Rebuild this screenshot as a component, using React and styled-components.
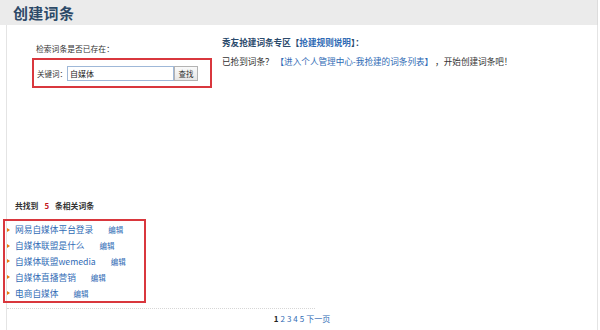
import React from "react";
import styled, { createGlobalStyle } from "styled-components";

const GlobalStyle = createGlobalStyle`
  html, body {
    margin: 0;
    padding: 0;
    background: #fff;
  }
  body {
    font-family: "Noto Sans CJK SC", "Noto Sans", sans-serif;
    color: #333;
  }
`;

const Page = styled.div`
  width: 598px;
  height: 330px;
  overflow: hidden;
`;

const Header = styled.div`
  height: 25px;
  background: #ebebeb;
  border-right: 1px solid #dcdcdc;
  padding-left: 13px;
  display: flex;
  align-items: center;
`;

const Title = styled.h1`
  margin: 0;
  font-size: 15px;
  font-weight: bold;
  color: #2d4a68;
  letter-spacing: 0.3px;
`;

const Panel = styled.div`
  margin-left: 6px;
  height: 305px;
  border-left: 1px solid #e4e4e4;
  border-right: 1px solid #e4e4e4;
`;

const TopRow = styled.div`
  display: flex;
`;

const SearchColumn = styled.div`
  margin-left: 25px;
  width: 180px;
`;

const Hint = styled.div`
  margin-top: 18px;
  margin-bottom: 3px;
  padding-left: 4px;
  font-size: 7.8px;
  line-height: 12px;
  color: #333;
`;

const SearchBox = styled.div`
  box-sizing: border-box;
  height: 30px;
  border: 2px solid #d9373d;
  display: flex;
  align-items: center;
  padding-left: 3px;
`;

const Label = styled.label`
  width: 30px;
  font-size: 7.5px;
  color: #333;
  white-space: nowrap;
`;

const Input = styled.input`
  box-sizing: border-box;
  width: 107px;
  height: 15px;
  margin: 0;
  padding: 0 2px;
  border: 1px solid #9fb8d8;
  font-family: inherit;
  font-size: 8px;
  color: #222;
  outline: none;
`;

const Button = styled.button`
  box-sizing: border-box;
  width: 24px;
  height: 15px;
  margin: 0;
  padding: 0;
  border: 1px solid #b3b3b3;
  background: linear-gradient(#fafafa, #e6e6e6);
  font-family: inherit;
  font-size: 7.5px;
  color: #333;
`;

const NoticeColumn = styled.div`
  margin-left: 10px;
  padding-top: 11px;
`;

const NoticeTitle = styled.div`
  font-size: 8.6px;
  line-height: 12px;
  font-weight: bold;
  color: #2b4a6c;
  white-space: nowrap;
`;

const NoticeText = styled.div`
  margin-top: 7px;
  font-size: 8.6px;
  line-height: 12px;
  color: #333;
  white-space: pre;
`;

const Link = styled.a`
  color: #2f6bb5;
  text-decoration: none;
`;

const Results = styled.div`
  margin-top: 112px;
`;

const Count = styled.div`
  padding-left: 8px;
  font-size: 7.8px;
  line-height: 12px;
  font-weight: bold;
  color: #333;
`;

const Num = styled.span`
  color: #c3141c;
  margin: 0 6px;
`;

const List = styled.ul`
  box-sizing: border-box;
  width: 143px;
  margin: 7px 0 0 -4px;
  padding: 1px 0 0;
  list-style: none;
  border: 2px solid #d9373d;
`;

const Item = styled.li`
  display: flex;
  align-items: center;
  height: 15.8px;
  font-size: 8.7px;
  white-space: nowrap;
`;

const Arrow = styled.span`
  width: 0;
  height: 0;
  margin: 0 5px 0 2px;
  border-top: 2.5px solid transparent;
  border-bottom: 2.5px solid transparent;
  border-left: 3px solid #e8780f;
`;

const Edit = styled.a`
  margin-left: 15px;
  font-size: 7.5px;
  color: #2f6bb5;
  text-decoration: none;
`;

const Divider = styled.div`
  width: 308px;
  margin-top: 5px;
  border-top: 1px dotted #d6d6d6;
`;

const Pager = styled.div`
  margin-top: 4px;
  text-align: center;
  font-size: 8px;
  line-height: 12px;
`;

const PageLink = styled.a`
  margin: 0 1px;
  color: ${(p) => (p.$current ? "#222" : "#2f6bb5")};
  font-weight: ${(p) => (p.$current ? "bold" : "normal")};
  text-decoration: none;
`;

const items = [
  "网易自媒体平台登录",
  "自媒体联盟是什么",
  "自媒体联盟wemedia",
  "自媒体直播营销",
  "电商自媒体",
];

export default function App() {
  return (
    <Page>
      <GlobalStyle />
      <Header>
        <Title>创建词条</Title>
      </Header>
      <Panel>
        <TopRow>
          <SearchColumn>
            <Hint>检索词条是否已存在：</Hint>
            <SearchBox>
              <Label htmlFor="kw">关键词：</Label>
              <Input id="kw" defaultValue="自媒体" />
              <Button>查找</Button>
            </SearchBox>
          </SearchColumn>
          <NoticeColumn>
            <NoticeTitle>
              秀友抢建词条专区【<Link href="#">抢建规则说明</Link>】：
            </NoticeTitle>
            <NoticeText>
              已抢到词条？ <Link href="#">【进入个人管理中心-我抢建的词条列表】</Link> ，开始创建词条吧！
            </NoticeText>
          </NoticeColumn>
        </TopRow>
        <Results>
          <Count>
            共找到<Num>5</Num>条相关词条
          </Count>
          <List>
            {items.map((t) => (
              <Item key={t}>
                <Arrow />
                <Link href="#">{t}</Link>
                <Edit href="#">编辑</Edit>
              </Item>
            ))}
          </List>
          <Divider />
          <Pager>
            <PageLink $current>1</PageLink>
            {[2, 3, 4, 5].map((n) => (
              <PageLink key={n} href="#">{n}</PageLink>
            ))}
            <PageLink href="#">下一页</PageLink>
          </Pager>
        </Results>
      </Panel>
    </Page>
  );
}
